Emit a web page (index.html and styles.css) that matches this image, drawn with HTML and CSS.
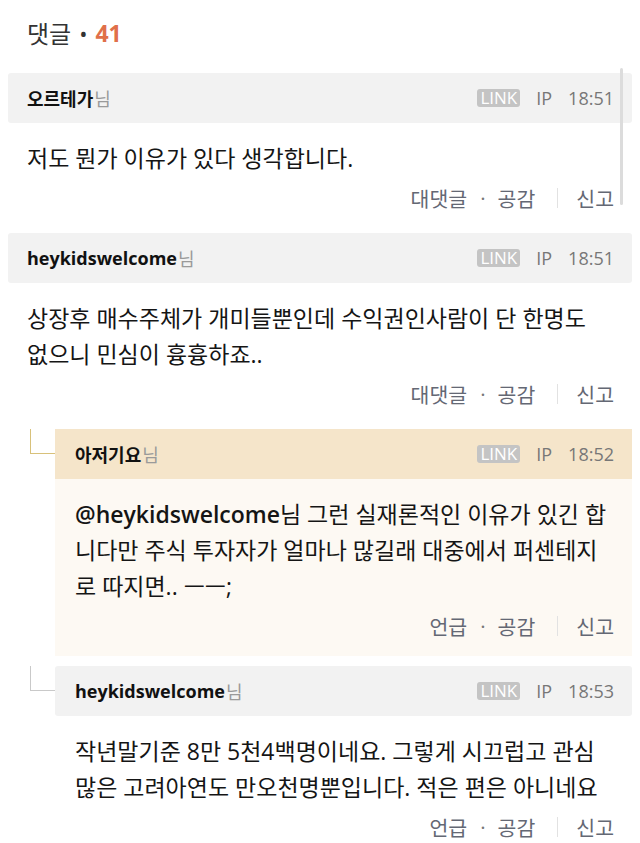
FILE: index.html
```html
<!DOCTYPE html>
<html lang="ko">
<head>
<meta charset="utf-8">
<title>댓글</title>
<link rel="stylesheet" href="styles.css">
</head>
<body>
<div class="page">
  <h2 class="title"><span>댓글</span><span class="bullet">•</span><span class="count">41</span></h2>
  <ul class="comments">
    <li class="comment">
      <div class="head">
        <span class="name">오르테가</span><span class="nim">님</span>
        <div class="meta"><span class="badge">LINK</span><span>IP</span><span>18:51</span></div>
      </div>
      <p class="text">저도 뭔가 이유가 있다 생각합니다.</p>
      <div class="actions"><span>대댓글</span><span class="dot">·</span><span>공감</span><span class="sep"></span><span>신고</span></div>
    </li>
    <li class="comment">
      <div class="head">
        <span class="name">heykidswelcome</span><span class="nim">님</span>
        <div class="meta"><span class="badge">LINK</span><span>IP</span><span>18:51</span></div>
      </div>
      <p class="text">상장후 매수주체가 개미들뿐인데 수익권인사람이 단 한명도<br>없으니 민심이 흉흉하죠..</p>
      <div class="actions"><span>대댓글</span><span class="dot">·</span><span>공감</span><span class="sep"></span><span>신고</span></div>
    </li>
    <li class="reply reply-writer">
      <div class="branch"><div class="branch-line"></div></div>
      <div class="box">
        <div class="head">
          <span class="name">아저기요</span><span class="nim">님</span>
          <div class="meta"><span class="badge">LINK</span><span>IP</span><span>18:52</span></div>
        </div>
        <p class="text"><span class="mention">@heykidswelcome</span>님 그런 실재론적인 이유가 있긴 합<br>니다만 주식 투자자가 얼마나 많길래 대중에서 퍼센테지<br>로 따지면.. ㅡㅡ;</p>
        <div class="actions"><span>언급</span><span class="dot">·</span><span>공감</span><span class="sep"></span><span>신고</span></div>
      </div>
    </li>
    <li class="reply">
      <div class="branch"><div class="branch-line"></div></div>
      <div class="box">
        <div class="head">
          <span class="name">heykidswelcome</span><span class="nim">님</span>
          <div class="meta"><span class="badge">LINK</span><span>IP</span><span>18:53</span></div>
        </div>
        <p class="text">작년말기준 8만 5천4백명이네요. 그렇게 시끄럽고 관심<br>많은 고려아연도 만오천명뿐입니다. 적은 편은 아니네요</p>
        <div class="actions"><span>언급</span><span class="dot">·</span><span>공감</span><span class="sep"></span><span>신고</span></div>
      </div>
    </li>
  </ul>
  <div class="scrollbar"></div>
</div>
</body>
</html>
```

FILE: styles.css
```css
* { box-sizing: border-box; }
html, body { margin: 0; padding: 0; background: #fff; }
body {
  font-family: "Open Sans", "Noto Sans CJK KR", sans-serif;
  color: #222;
  overflow: hidden;
}
.page {
  position: relative;
  padding: 0 8px;
}
.title {
  margin: 0 0 24px;
  padding: 18px 0 0 19px;
  font-size: 24px;
  line-height: 31px;
  font-weight: 400;
  color: #333;
  display: flex;
  align-items: center;
}
.title .bullet { margin: 0 8px 0 8px; font-size: 22px; color: #333; }
.title .count { color: #e0704a; font-weight: 700; font-size: 23px; }

.comments { list-style: none; margin: 0; padding: 0; }
.comment { margin-bottom: 6px; padding-bottom: 14px; }

.head {
  height: 50px;
  background: #f2f2f2;
  border-radius: 3px;
  display: flex;
  align-items: center;
  padding: 0 18px 0 19px;
}
.name { font-size: 18px; font-weight: 700; color: #111; }
.nim { font-size: 18px; color: #9a9a9a; margin-left: 1px; }
.meta {
  margin-left: auto;
  display: flex;
  align-items: center;
  gap: 16px;
  font-size: 18px;
  color: #777;
}
.badge {
  background: #c4c4c4;
  color: #fff;
  font-size: 17px;
  line-height: 18px;
  height: 18px;
  padding: 0 3px;
  border-radius: 3px;
}
.text {
  margin: 0;
  padding: 17px 18px 0 19px;
  font-size: 23px;
  line-height: 36px;
  color: #151515;
}
.mention { font-weight: 600; }
.actions {
  margin-top: 7px;
  height: 30px;
  display: flex;
  justify-content: flex-end;
  align-items: center;
  padding-right: 18px;
  font-size: 20.5px;
  color: #646874;
}
.actions .dot { margin: 0 12px 0 13px; color: #777; }
.actions .sep {
  width: 1px;
  height: 20px;
  background: #e2e2e2;
  margin: 0 18px 0 22px;
}

.reply { display: flex; margin-bottom: 10px; }
.branch { width: 47px; flex: none; }
.branch-line {
  margin-left: 22px;
  width: 25px;
  height: 25px;
  border-left: 1px solid #c9c9c9;
  border-bottom: 1px solid #c9c9c9;
}
.box { flex: 1; padding-bottom: 15px; }
.reply-writer .box { background: #fdf9f3; }
.reply-writer .head { background: #f5e5ca; border-radius: 0; }
.reply-writer .branch-line { border-color: #d8c17a; }
.reply .text { padding-left: 20px; }
.reply .head { padding-left: 20px; }

.scrollbar {
  position: absolute;
  left: 620px;
  top: 68px;
  width: 3px;
  height: 137px;
  background: #dcdcdc;
  border-radius: 2px;
}
```
